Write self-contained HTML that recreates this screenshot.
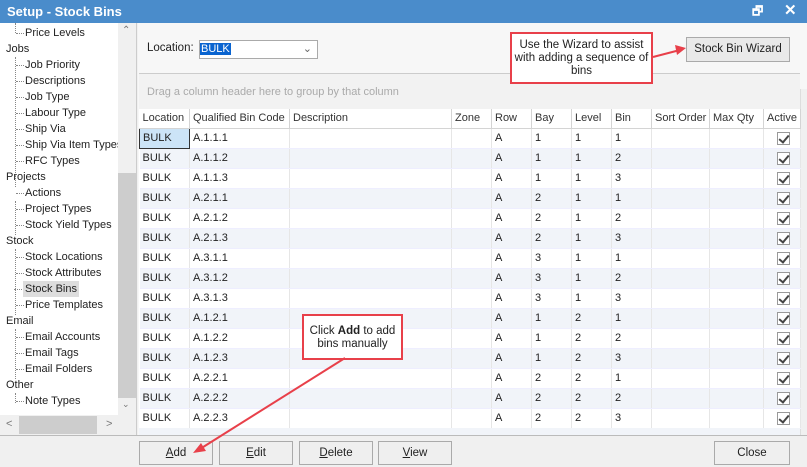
<!DOCTYPE html>
<html><head><meta charset="utf-8">
<style>
*{box-sizing:border-box;margin:0;padding:0}
body{width:807px;height:467px;overflow:hidden;background:#f0f0f0;font-family:"Liberation Sans",sans-serif;font-size:11px;color:#222;position:relative}
.abs{position:absolute}
#title{left:0;top:0;width:807px;height:23px;background:#4a8ccb;color:#fff;font-weight:bold;font-size:13px;line-height:23px;padding-left:7px}
#left{left:0;top:23px;width:137px;height:412px;background:#fff;border-right:1px solid #ccc}
.t{position:absolute;height:16px;line-height:16px;white-space:nowrap}
.p{left:6px}
.c{left:25px}
.c:before{content:"";position:absolute;left:-9px;top:8px;width:8px;border-top:1px dotted #888}
.vl{position:absolute;left:15px;border-left:1px dotted #888}
#right{left:138px;top:23px;width:669px;height:412px;background:#f7f7f7}
table{border-collapse:collapse;table-layout:fixed;position:absolute;left:139px;top:109px;background:#fff}
td{height:20px;border-right:1px solid #e6e6e6;border-bottom:1px solid #eef;padding-left:3px;white-space:nowrap;overflow:hidden}
tr.h td{height:19px;background:#fff;border-right:1px solid #d4d4d4;border-bottom:1px solid #d4d4d4;color:#333}
tr:nth-child(odd):not(.h) td{background:#f1f4f9}
.cb{display:inline-block;width:13px;height:13px;border:1px solid #999;background:#fff;position:relative;top:2px;margin-left:10px}
.cb:after{content:"";position:absolute;left:3px;top:0px;width:4px;height:8px;border-right:2px solid #444;border-bottom:2px solid #444;transform:rotate(40deg)}
.btn{position:absolute;top:441px;height:24px;background:#efefef;border:1px solid #aaa;text-align:center;line-height:22px;font-size:11.5px}
.call{position:absolute;background:#fff;border:2px solid #e8404a;text-align:center;font-size:11.5px;line-height:13px}
</style></head><body>
<div id="title" class="abs">Setup - Stock Bins
<span style="position:absolute;left:752px;top:0;font-size:12px">&#x1F5D7;</span>
<span style="position:absolute;left:784px;top:-1px;font-size:15px">✕</span></div>
<div id="left" class="abs">
<div class="vl" style="top:0;height:10px"></div>
<div class="vl" style="top:34px;height:130px"></div>
<div class="vl" style="top:178px;height:34px"></div>
<div class="vl" style="top:226px;height:66px"></div>
<div class="vl" style="top:306px;height:50px"></div>
<div class="vl" style="top:370px;height:10px"></div>
<div class="t c" style="top:2px">Price Levels</div>
<div class="t p" style="top:18px">Jobs</div>
<div class="t c" style="top:34px">Job Priority</div>
<div class="t c" style="top:50px">Descriptions</div>
<div class="t c" style="top:66px">Job Type</div>
<div class="t c" style="top:82px">Labour Type</div>
<div class="t c" style="top:98px">Ship Via</div>
<div class="t c" style="top:114px">Ship Via Item Types</div>
<div class="t c" style="top:130px">RFC Types</div>
<div class="t p" style="top:146px">Projects</div>
<div class="t c" style="top:162px">Actions</div>
<div class="t c" style="top:178px">Project Types</div>
<div class="t c" style="top:194px">Stock Yield Types</div>
<div class="t p" style="top:210px">Stock</div>
<div class="t c" style="top:226px">Stock Locations</div>
<div class="t c" style="top:242px">Stock Attributes</div>
<div class="t c" style="top:258px;background:#ddd;padding:0 2px;margin-left:-2px">Stock Bins</div>
<div class="t c" style="top:274px">Price Templates</div>
<div class="t p" style="top:290px">Email</div>
<div class="t c" style="top:306px">Email Accounts</div>
<div class="t c" style="top:322px">Email Tags</div>
<div class="t c" style="top:338px">Email Folders</div>
<div class="t p" style="top:354px">Other</div>
<div class="t c" style="top:370px">Note Types</div>
<div class="abs" style="left:118px;top:0;width:18px;height:392px;background:#f0f0f0"></div>
<div class="abs" style="left:118px;top:150px;width:18px;height:225px;background:#cdcdcd"></div>
<div class="abs" style="left:122px;top:2px;color:#777;font-size:10px">⌃</div>
<div class="abs" style="left:122px;top:376px;color:#777;font-size:9px">⌄</div>
<div class="abs" style="left:0;top:392px;width:136px;height:20px;background:#f0f0f0"></div>
<div class="abs" style="left:19px;top:393px;width:78px;height:18px;background:#cdcdcd"></div>
<div class="abs" style="left:6px;top:395px;color:#777">&lt;</div>
<div class="abs" style="left:106px;top:395px;color:#777">&gt;</div>
</div>
<div id="right" class="abs"></div>
<div class="abs" style="left:147px;top:42px;font-size:11.5px">Location:</div>
<div class="abs" style="left:199px;top:40px;width:119px;height:19px;background:#fff;border:1px solid #aaa">
<span style="background:#0a64d0;color:#fff;padding:0 1px;line-height:17px">BULK</span>
<span style="position:absolute;right:5px;top:1px;color:#666">⌄</span></div>
<div class="abs" style="left:139px;top:73px;width:661px;height:36px;background:#f2f2f2;border-top:1px solid #ccc;color:#aaa;padding:12px 0 0 8px">Drag a column header here to group by that column</div>
<div class="abs" style="left:800px;top:89px;width:7px;height:346px;background:#f0f0f0;border-left:1px solid #ddd"></div>
<table>
<colgroup><col style="width:50px"><col style="width:100px"><col style="width:162px"><col style="width:40px"><col style="width:40px"><col style="width:40px"><col style="width:40px"><col style="width:40px"><col style="width:58px"><col style="width:54px"><col style="width:37px"></colgroup>
<tr class="h"><td>Location</td><td>Qualified Bin Code</td><td>Description</td><td>Zone</td><td>Row</td><td>Bay</td><td>Level</td><td>Bin</td><td>Sort Order</td><td>Max Qty</td><td>Active</td></tr>
<tr><td style="background:#cce4f7;border:1px solid #333">BULK</td><td>A.1.1.1</td><td></td><td></td><td>A</td><td>1</td><td>1</td><td>1</td><td></td><td></td><td><span class="cb"></span></td></tr>
<tr><td>BULK</td><td>A.1.1.2</td><td></td><td></td><td>A</td><td>1</td><td>1</td><td>2</td><td></td><td></td><td><span class="cb"></span></td></tr>
<tr><td>BULK</td><td>A.1.1.3</td><td></td><td></td><td>A</td><td>1</td><td>1</td><td>3</td><td></td><td></td><td><span class="cb"></span></td></tr>
<tr><td>BULK</td><td>A.2.1.1</td><td></td><td></td><td>A</td><td>2</td><td>1</td><td>1</td><td></td><td></td><td><span class="cb"></span></td></tr>
<tr><td>BULK</td><td>A.2.1.2</td><td></td><td></td><td>A</td><td>2</td><td>1</td><td>2</td><td></td><td></td><td><span class="cb"></span></td></tr>
<tr><td>BULK</td><td>A.2.1.3</td><td></td><td></td><td>A</td><td>2</td><td>1</td><td>3</td><td></td><td></td><td><span class="cb"></span></td></tr>
<tr><td>BULK</td><td>A.3.1.1</td><td></td><td></td><td>A</td><td>3</td><td>1</td><td>1</td><td></td><td></td><td><span class="cb"></span></td></tr>
<tr><td>BULK</td><td>A.3.1.2</td><td></td><td></td><td>A</td><td>3</td><td>1</td><td>2</td><td></td><td></td><td><span class="cb"></span></td></tr>
<tr><td>BULK</td><td>A.3.1.3</td><td></td><td></td><td>A</td><td>3</td><td>1</td><td>3</td><td></td><td></td><td><span class="cb"></span></td></tr>
<tr><td>BULK</td><td>A.1.2.1</td><td></td><td></td><td>A</td><td>1</td><td>2</td><td>1</td><td></td><td></td><td><span class="cb"></span></td></tr>
<tr><td>BULK</td><td>A.1.2.2</td><td></td><td></td><td>A</td><td>1</td><td>2</td><td>2</td><td></td><td></td><td><span class="cb"></span></td></tr>
<tr><td>BULK</td><td>A.1.2.3</td><td></td><td></td><td>A</td><td>1</td><td>2</td><td>3</td><td></td><td></td><td><span class="cb"></span></td></tr>
<tr><td>BULK</td><td>A.2.2.1</td><td></td><td></td><td>A</td><td>2</td><td>2</td><td>1</td><td></td><td></td><td><span class="cb"></span></td></tr>
<tr><td>BULK</td><td>A.2.2.2</td><td></td><td></td><td>A</td><td>2</td><td>2</td><td>2</td><td></td><td></td><td><span class="cb"></span></td></tr>
<tr><td>BULK</td><td>A.2.2.3</td><td></td><td></td><td>A</td><td>2</td><td>2</td><td>3</td><td></td><td></td><td><span class="cb"></span></td></tr>
</table>
<div class="abs" style="left:139px;top:428px;width:661px;height:7px;background:#f1f4f9;overflow:hidden"></div>
<div class="abs" style="left:0;top:435px;width:807px;height:32px;background:#f0f0f0;border-top:1px solid #bbb"></div>
<div class="btn" style="left:139px;width:74px"><u>A</u>dd</div>
<div class="btn" style="left:219px;width:74px"><u>E</u>dit</div>
<div class="btn" style="left:299px;width:74px"><u>D</u>elete</div>
<div class="btn" style="left:378px;width:74px"><u>V</u>iew</div>
<div class="btn" style="left:714px;width:76px">Close</div>
<div class="abs" style="left:686px;top:37px;width:104px;height:25px;background:#e9e9e9;border:1px solid #aaa;text-align:center;line-height:23px;font-size:11.5px">Stock Bin Wizard</div>
<div class="call" style="left:510px;top:32px;width:143px;height:52px;padding-top:5px">Use the Wizard to assist with adding a sequence of bins</div>
<div class="call" style="left:302px;top:314px;width:101px;height:46px;padding-top:9px">Click <b>Add</b> to add bins manually</div>
<svg class="abs" style="left:0;top:0" width="807" height="467">
<line x1="653" y1="57" x2="680" y2="50" stroke="#e8404a" stroke-width="2"/>
<polygon points="686,48 675,45 677,55" fill="#e8404a"/>
<line x1="345" y1="358" x2="200" y2="449" stroke="#e8404a" stroke-width="2"/>
<polygon points="193,453 201,443 206,451" fill="#e8404a"/>
</svg>
</body></html>
